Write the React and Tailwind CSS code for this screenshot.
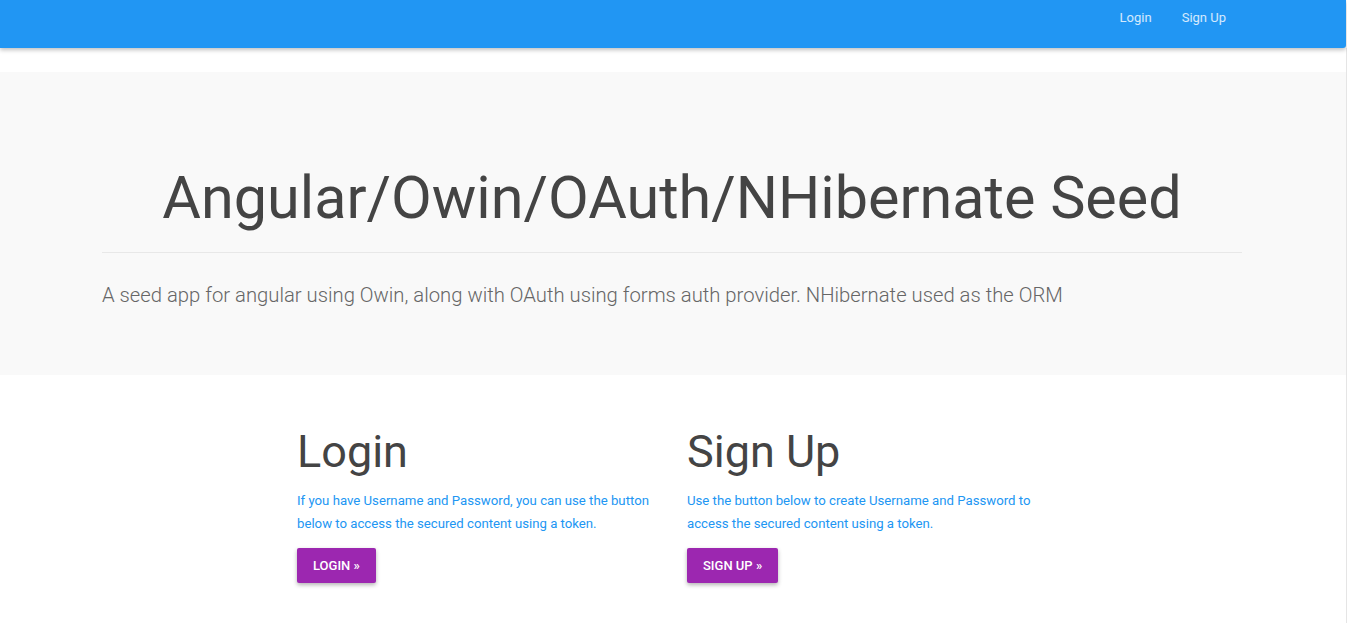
export default function App() {
  return (
    <div className="min-h-screen w-[1347px] bg-white font-['Roboto','Liberation_Sans',sans-serif]">
      <header className="relative z-10 h-12 w-[1346px] rounded-br-[3px] bg-[#2196f3] shadow-[0_2px_4px_rgba(0,0,0,0.25)]">
        <div className="mx-auto flex h-full w-[1170px] items-start justify-end px-[15px]">
          <nav className="mr-[2px] flex">
            <a href="#" className="px-[15px] pt-[9px] text-[13px] leading-[18px] text-white/80">Login</a>
            <a href="#" className="px-[15px] pt-[9px] text-[13px] leading-[18px] text-white/80">Sign Up</a>
          </nav>
        </div>
      </header>

      <main className="border-r border-[#e5e5e5] pt-6">
        <section className="h-[303px] bg-[#f9f9f9]">
          <div className="ml-[87px] w-[1170px] px-[15px] pt-[92px]">
            <h1 className="text-center text-[59.3px] leading-[68px] font-normal text-[#444]">
              Angular/Owin/OAuth/NHibernate Seed
            </h1>
            <hr className="mt-[20px] border-t border-[#e8e8e8]" />
            <p className="mt-[27px] text-[20.25px] leading-[30px] font-light text-[#666]">
              A seed app for angular using Owin, along with OAuth using forms auth provider. NHibernate used as the ORM
            </p>
          </div>
        </section>

        <section className="ml-[87px] w-[1170px] pt-[52px] pb-[40px]">
          <div className="ml-[195px] grid w-[780px] grid-cols-2">
            <div className="px-[15px]">
              <h2 className="text-[45px] leading-[50px] font-normal text-[#444]">Login</h2>
              <p className="mt-[12px] w-[360px] text-[13.2px] leading-[23px] text-[#2196f3]">
                If you have Username and Password, you can use the button below to access the secured content using a token.
              </p>
              <button className="mt-[13px] h-[35px] rounded-[2px] bg-[#9c27b0] px-4 text-[13px] font-medium uppercase text-white shadow-[0_2px_4px_rgba(0,0,0,0.3)]">
                Login »
              </button>
            </div>
            <div className="px-[15px]">
              <h2 className="text-[45px] leading-[50px] font-normal text-[#444]">Sign Up</h2>
              <p className="mt-[12px] w-[360px] text-[13.2px] leading-[23px] text-[#2196f3]">
                Use the button below to create Username and Password to access the secured content using a token.
              </p>
              <button className="mt-[13px] h-[35px] rounded-[2px] bg-[#9c27b0] px-4 text-[13px] font-medium uppercase text-white shadow-[0_2px_4px_rgba(0,0,0,0.3)]">
                Sign Up »
              </button>
            </div>
          </div>
        </section>
      </main>
    </div>
  )
}
